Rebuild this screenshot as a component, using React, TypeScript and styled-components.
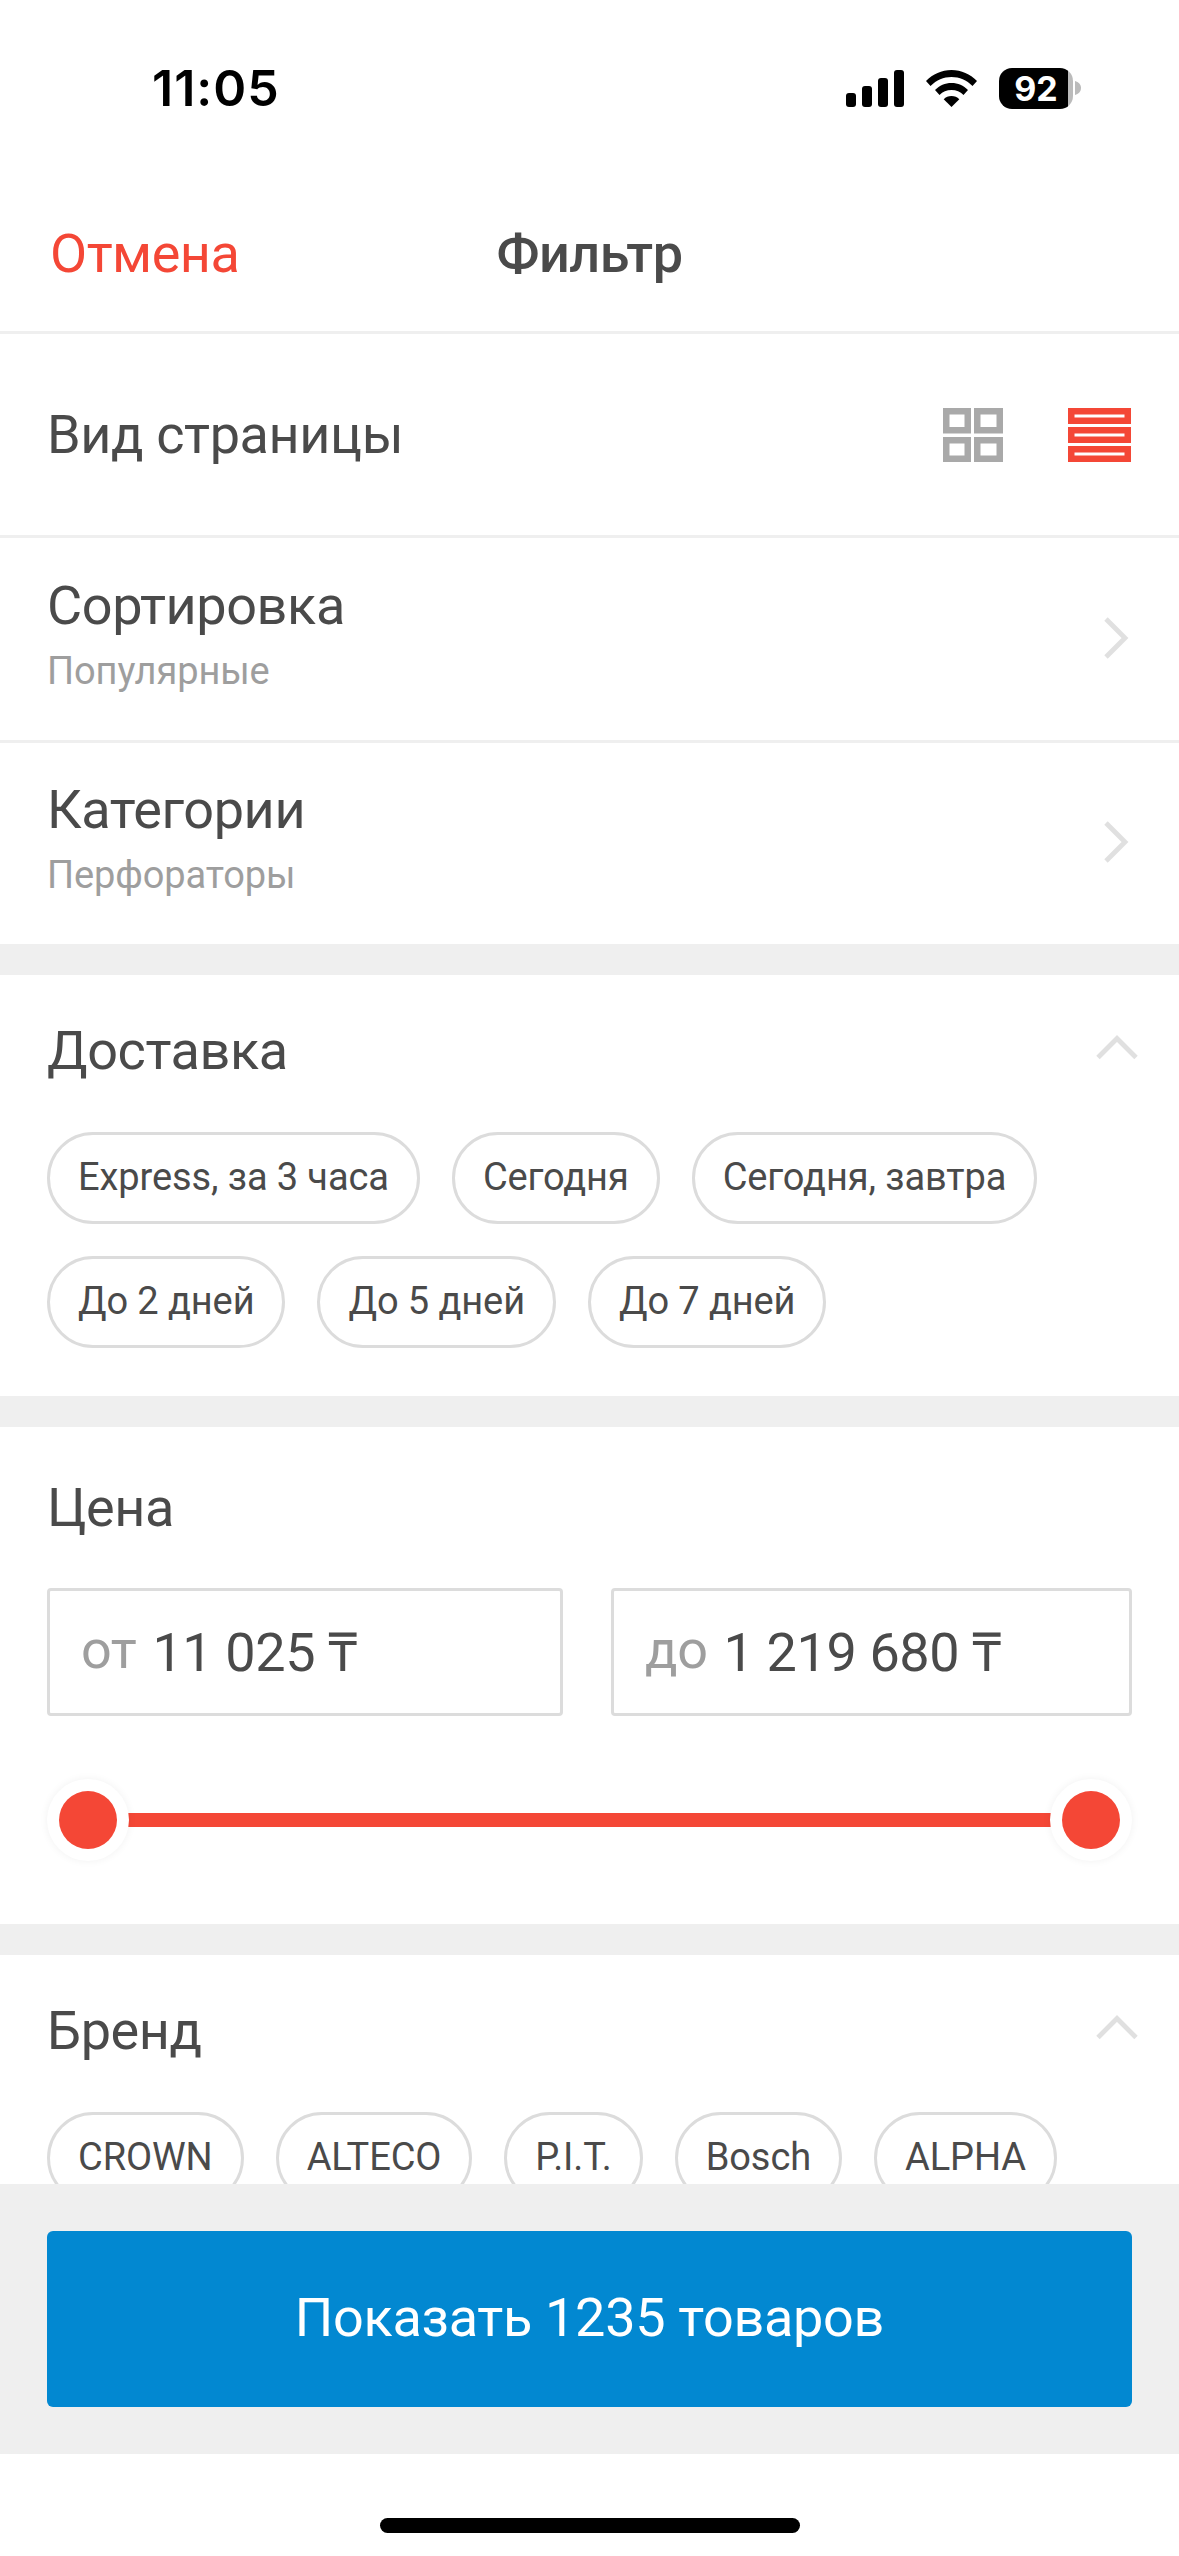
import React from "react";
import styled, { createGlobalStyle } from "styled-components";

const Global = createGlobalStyle`
  html, body { margin: 0; padding: 0; background: #fff; }
  * { box-sizing: border-box; }
`;

const Screen = styled.div`
  width: 1179px;
  height: 2556px;
  display: flex;
  flex-direction: column;
  overflow: hidden;
  background: #fff;
  font-family: Roboto, "Liberation Sans", sans-serif;
  color: #4a4a4a;
`;

const StatusBar = styled.div`
  height: 176px;
  flex: none;
  display: flex;
  align-items: center;
  justify-content: space-between;
  padding: 0 98px 0 152px;
  color: #000;
`;

const Time = styled.span`
  font-family: Inter, sans-serif;
  font-weight: 600;
  font-size: 50px;
  letter-spacing: 1px;
`;

const StatusIcons = styled.div`
  display: flex;
  align-items: center;
  gap: 22px;
`;

const Battery = styled.div`
  display: flex;
  align-items: center;
  gap: 2px;
`;

const BatteryBody = styled.div`
  width: 74px;
  height: 41px;
  border-radius: 13px;
  background: linear-gradient(to right, #000 69px, #bbb 69px);
  color: #fff;
  display: flex;
  align-items: center;
  justify-content: center;
  font-family: Inter, sans-serif;
  font-weight: 700;
  font-size: 34px;
`;

const Nav = styled.header`
  height: 158px;
  flex: none;
  display: grid;
  grid-template-columns: 1fr auto 1fr;
  align-items: center;
  padding: 0 50px;
  border-bottom: 3px solid #efefef;
`;

const Cancel = styled.span`
  font-size: 54px;
  letter-spacing: -0.5px;
  color: #f44736;
`;

const NavTitle = styled.span`
  font-size: 54px;
  font-weight: 500;
  letter-spacing: -0.5px;
`;

const Scroll = styled.main`
  flex: 1;
  min-height: 0;
  overflow: hidden;
`;

const Row = styled.div<{ $h: number; $divider?: boolean }>`
  height: ${(p) => p.$h}px;
  display: flex;
  align-items: center;
  justify-content: space-between;
  padding: 0 47px;
  border-bottom: ${(p) => (p.$divider ? "3px solid #efefef" : "none")};
`;

const Title = styled.div`
  font-size: 54px;
  line-height: 64px;
  letter-spacing: -0.4px;
`;

const TextStack = styled.div`
  padding-bottom: 13px;
`;

const Sub = styled.div`
  font-size: 38px;
  line-height: 42px;
  letter-spacing: -0.1px;
  color: #9e9e9e;
  margin-top: 12px;
`;

const ViewIcons = styled.div`
  display: flex;
  align-items: center;
  gap: 65px;
  margin-right: 1px;
`;

const Band = styled.div`
  height: 31px;
  background: #efefef;
`;

const Section = styled.section<{ $pt?: number; $pb?: number }>`
  padding: ${(p) => p.$pt ?? 41}px 47px ${(p) => p.$pb ?? 48}px;
`;

const SectionHead = styled.div`
  display: flex;
  align-items: center;
  justify-content: space-between;
  height: 70px;
`;

const Chips = styled.div`
  display: flex;
  flex-wrap: wrap;
  gap: 32px;
  margin-top: 46px;
`;

const Chip = styled.span`
  height: 92px;
  padding: 0 28px 2px;
  display: inline-flex;
  align-items: center;
  border: 3px solid #dcdcdc;
  border-radius: 46px;
  font-size: 38px;
  letter-spacing: -0.1px;
  white-space: nowrap;
`;

const Inputs = styled.div`
  display: grid;
  grid-template-columns: 516px 521px;
  justify-content: space-between;
  margin-top: 45px;
`;

const Field = styled.div`
  height: 128px;
  display: flex;
  align-items: center;
  gap: 16px;
  padding: 0 0 5px 31px;
  border: 3px solid #dcdcdc;
  border-radius: 4px;
  font-size: 54px;
  letter-spacing: -0.4px;
`;

const Prefix = styled.span`
  color: #9e9e9e;
`;

const Slider = styled.div`
  position: relative;
  height: 82px;
  margin-top: 63px;
  display: flex;
  align-items: center;
  justify-content: space-between;
`;

const Track = styled.div`
  position: absolute;
  left: 41px;
  right: 41px;
  top: 34px;
  height: 14px;
  background: #f44736;
`;

const Thumb = styled.div`
  position: relative;
  width: 82px;
  height: 82px;
  border-radius: 50%;
  background: #fff;
  box-shadow: 0 0 8px rgba(0, 0, 0, 0.06);
  display: flex;
  align-items: center;
  justify-content: center;
  &::after {
    content: "";
    width: 58px;
    height: 58px;
    border-radius: 50%;
    background: #f44736;
  }
`;

const Footer = styled.footer`
  height: 270px;
  flex: none;
  background: #efefef;
  padding: 47px 47px 0;
`;

const ShowButton = styled.button`
  display: block;
  width: 100%;
  height: 176px;
  border: 0;
  border-radius: 6px;
  padding: 0 0 4px;
  background: #0288d1;
  color: #fff;
  font-family: inherit;
  font-size: 54px;
  letter-spacing: -0.3px;
`;

const HomeArea = styled.div`
  height: 102px;
  flex: none;
  display: flex;
  justify-content: center;
  padding-top: 64px;
`;

const HomeBar = styled.div`
  width: 420px;
  height: 15px;
  border-radius: 8px;
  background: #000;
`;

const Signal = () => (
  <svg width="58" height="37" viewBox="0 0 58 37" fill="#000">
    <rect x="0" y="23" width="10" height="14" rx="3" />
    <rect x="16" y="16" width="10" height="21" rx="3" />
    <rect x="32" y="8" width="10" height="29" rx="3" />
    <rect x="48" y="0" width="10" height="37" rx="3" />
  </svg>
);

const Wifi = () => (
  <svg width="51" height="37" viewBox="0 0 51 37" fill="#000">
    <path d="M25.500 0C15.500 0 7 4 0 11l4.500 5C10.500 10 17.500 7 25.500 7s15 3 21 9l4.500-5C44 4 35.500 0 25.500 0z" />
    <path d="M25.500 13c-6.500 0-12 2.500-16.500 7l4.500 5c3.200-3.200 7.200-5 12-5s8.800 1.800 12 5l4.500-5c-4.500-4.500-10-7-16.500-7z" />
    <path d="M25.500 26c-3.200 0-5.700 1-7.800 3.200L25.500 37l7.800-7.800C31.200 27 28.700 26 25.500 26z" />
  </svg>
);

const Nub = () => (
  <svg width="6" height="14" viewBox="0 0 6 14" fill="#bbb">
    <path d="M0 0c3.500 1 6 3.500 6 7s-2.500 6-6 7z" />
  </svg>
);

const GridIcon = () => (
  <svg width="60" height="54" viewBox="0 0 60 54" fill="none" stroke="#a9a9a9" strokeWidth="6.500">
    <rect x="3.250" y="3.250" width="21.500" height="19" />
    <rect x="34.250" y="3.250" width="22.500" height="19" />
    <rect x="3.250" y="32.250" width="21.500" height="18.500" />
    <rect x="34.250" y="32.250" width="22.500" height="18.500" />
  </svg>
);

const ListIcon = () => (
  <svg width="63" height="54" viewBox="0 0 63 54" fill="#f44736">
    <path fillRule="evenodd" d="M0 0h63v16H0zM6.500 6.500v3h50v-3z" />
    <path fillRule="evenodd" d="M0 19h63v16H0zM6.500 25.500v3h50v-3z" />
    <path fillRule="evenodd" d="M0 38h63v16H0zM6.500 44.500v3h50v-3z" />
  </svg>
);

const RightBox = styled.span`
  display: flex;
  margin: 0 3px 3px 0;
`;

const ChevronRight = () => (
  <RightBox>
    <svg width="26" height="44" viewBox="0 0 26 44" fill="none" stroke="#e0e0e0" strokeWidth="4.800">
      <path d="M3 3l19 19L3 41" />
    </svg>
  </RightBox>
);

const UpBox = styled.span`
  display: flex;
  margin: 0 -7px 9px 0;
`;

const ChevronUp = () => (
  <UpBox>
    <svg width="44" height="26" viewBox="0 0 44 26" fill="none" stroke="#e0e0e0" strokeWidth="4.800">
      <path d="M3 23.500l19-19 19 19" />
    </svg>
  </UpBox>
);

const delivery = ["Express, за 3 часа", "Сегодня", "Сегодня, завтра", "До 2 дней", "До 5 дней", "До 7 дней"];
const brands = ["CROWN", "ALTECO", "P.I.T.", "Bosch", "ALPHA"];

export default function App() {
  return (
    <Screen>
      <Global />
      <StatusBar>
        <Time>11:05</Time>
        <StatusIcons>
          <Signal />
          <Wifi />
          <Battery>
            <BatteryBody>92</BatteryBody>
            <Nub />
          </Battery>
        </StatusIcons>
      </StatusBar>
      <Nav>
        <Cancel>Отмена</Cancel>
        <NavTitle>Фильтр</NavTitle>
        <span />
      </Nav>
      <Scroll>
        <Row $h={204} $divider>
          <Title>Вид страницы</Title>
          <ViewIcons>
            <GridIcon />
            <ListIcon />
          </ViewIcons>
        </Row>
        <Row $h={205} $divider>
          <TextStack>
            <Title>Сортировка</Title>
            <Sub>Популярные</Sub>
          </TextStack>
          <ChevronRight />
        </Row>
        <Row $h={201}>
          <TextStack>
            <Title>Категории</Title>
            <Sub>Перфораторы</Sub>
          </TextStack>
          <ChevronRight />
        </Row>
        <Band />
        <Section>
          <SectionHead>
            <Title>Доставка</Title>
            <ChevronUp />
          </SectionHead>
          <Chips>
            {delivery.map((c) => (
              <Chip key={c}>{c}</Chip>
            ))}
          </Chips>
        </Section>
        <Band />
        <Section $pt={46} $pb={63}>
          <SectionHead>
            <Title>Цена</Title>
          </SectionHead>
          <Inputs>
            <Field>
              <Prefix>от</Prefix>
              <span>11 025 ₸</span>
            </Field>
            <Field>
              <Prefix>до</Prefix>
              <span>1 219 680 ₸</span>
            </Field>
          </Inputs>
          <Slider>
            <Track />
            <Thumb />
            <Thumb />
          </Slider>
        </Section>
        <Band />
        <Section>
          <SectionHead>
            <Title>Бренд</Title>
            <ChevronUp />
          </SectionHead>
          <Chips>
            {brands.map((c) => (
              <Chip key={c}>{c}</Chip>
            ))}
          </Chips>
        </Section>
      </Scroll>
      <Footer>
        <ShowButton>Показать 1235 товаров</ShowButton>
      </Footer>
      <HomeArea>
        <HomeBar />
      </HomeArea>
    </Screen>
  );
}
